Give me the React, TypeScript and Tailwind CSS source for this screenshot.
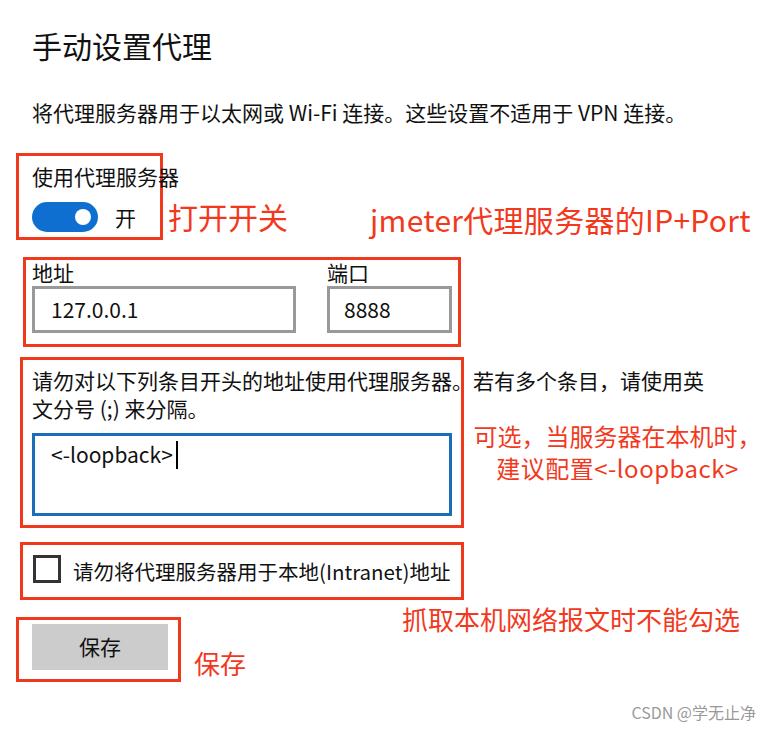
import React from "react";

const red = "border-[3px] border-[#f0391c]";
const note = "text-[#f2391d] whitespace-nowrap";

export default function App() {
  return (
    <div className="w-[765px] h-[730px] overflow-hidden bg-white text-[#111] font-['Noto_Sans_CJK_SC',sans-serif]">
      {/* TITLE */}
      <h1 className="ml-[32px] pt-[27px] text-[30px] leading-[36px] font-normal">
        手动设置代理
      </h1>
      <p className="ml-[32px] mt-[35px] text-[21px] leading-[28px] whitespace-nowrap">
        将代理服务器用于以太网或 Wi-Fi 连接。这些设置不适用于 VPN 连接。
      </p>

      {/* SWITCH */}
      <div className="mt-[27px] flex items-start">
        <div className={`${red} ml-[16px] w-[147px] pl-[13px] pt-[6px] pb-[5px]`}>
          <div className="text-[21px] leading-[28px] whitespace-nowrap">使用代理服务器</div>
          <div className="mt-[12px] flex items-center">
            <div className="relative w-[66px] h-[30px] rounded-full bg-[#0f6fd0]">
              <div className="absolute right-[7px] top-[7px] w-[16px] h-[16px] rounded-full bg-white" />
            </div>
            <span className="ml-[17px] text-[21px] leading-[28px]">开</span>
          </div>
        </div>
        <div className={`${note} ml-[5px] mt-[45px] text-[30px] leading-[36px]`}>打开开关</div>
        <div className={`${note} ml-[82px] mt-[48px] text-[30px] leading-[36px] tracking-[0.3px]`}>
          jmeter代理服务器的IP+Port
        </div>
      </div>

      {/* ADDRESS + PORT */}
      <div className={`${red} mt-[17px] ml-[23px] w-[438px] pl-[6px] pr-[5px] pb-[11px] flex gap-[31px]`}>
        <div className="w-[264px]">
          <div className="text-[21px] leading-[24px]">地址</div>
          <div className="mt-[2px] h-[47px] border-[3px] border-[#999] pl-[16px] flex items-center text-[21px]">
            127.0.0.1
          </div>
        </div>
        <div className="w-[125px]">
          <div className="text-[21px] leading-[24px]">端口</div>
          <div className="mt-[2px] h-[47px] border-[3px] border-[#999] pl-[14px] flex items-center text-[21px]">
            8888
          </div>
        </div>
      </div>

      {/* EXCEPTIONS */}
      <div className="mt-[10px] flex items-start">
        <div className={`${red} ml-[20px] w-[444px] shrink-0 px-[9px] pt-[6px] pb-[9px]`}>
          <p className="text-[21px] leading-[28px] whitespace-nowrap">
            请勿对以下列条目开头的地址使用代理服务器。若有多个条目，请使用英
            <br />
            文分号 (;) 来分隔。
          </p>
          <div className="mt-[11px] h-[83px] border-[3px] border-[#1b6db8] pl-[16px] pt-[5px]">
            <div className="flex items-center h-[28px] text-[21px]">
              &lt;-loopback&gt;
              <span className="ml-[3px] w-[2px] h-[28px] bg-black" />
            </div>
          </div>
        </div>
        <div className={`${note} ml-[6px] mt-[63px] w-[295px] text-center text-[24px] leading-[32px]`}>
          可选，当服务器在本机时，
          <br />
          <span className="tracking-[0.5px]">建议配置&lt;-loopback&gt;</span>
        </div>
      </div>

      {/* LOCAL CHECKBOX */}
      <div className={`${red} mt-[14px] ml-[20px] w-[444px] h-[58px] pl-[10px] flex items-center`}>
        <div className="w-[28px] h-[28px] border-[3px] border-[#333] -mt-[4px]" />
        <span className="ml-[12px] text-[20.5px] leading-[28px] whitespace-nowrap">
          请勿将代理服务器用于本地(Intranet)地址
        </span>
      </div>

      {/* SAVE */}
      <div className="flex items-start">
        <div className={`${red} mt-[17px] ml-[16px] pl-[13px] pt-[4px] pr-[10px] pb-[9px]`}>
          <button className="w-[136px] h-[46px] bg-[#cccccc] text-[21px]">保存</button>
        </div>
        <div className={`${note} ml-[13px] mt-[47px] text-[26px] leading-[32px]`}>保存</div>
        <div className={`${note} ml-[156px] mt-[3px] text-[26px] leading-[32px]`}>
          抓取本机网络报文时不能勾选
        </div>
      </div>

      {/* WATERMARK */}
      <div className="mt-[19px] pr-[9px] text-right text-[16px] leading-[22px] text-[#9a9a9a]">
        CSDN @学无止净
      </div>
    </div>
  );
}
